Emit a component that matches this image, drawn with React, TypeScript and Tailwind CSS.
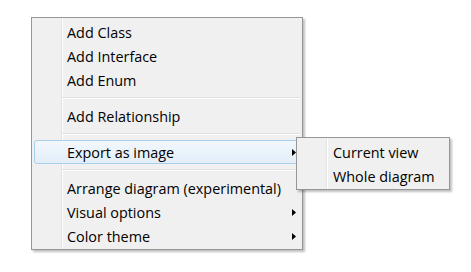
import React from "react";

type Entry = { label: string; sub?: boolean; active?: boolean } | "sep";

const mainItems: Entry[] = [
  { label: "Add Class" },
  { label: "Add Interface" },
  { label: "Add Enum" },
  "sep",
  { label: "Add Relationship" },
  "sep",
  { label: "Export as image", sub: true, active: true },
  "sep",
  { label: "Arrange diagram (experimental)" },
  { label: "Visual options", sub: true },
  { label: "Color theme", sub: true },
];

const gutter =
  "bg-[linear-gradient(to_right,#f0f0f0_29px,#e2e3e3_29px,#e2e3e3_30px,#ffffff_30px,#ffffff_31px,#f0f0f0_31px)]";

function Arrow() {
  return (
    <svg width="4" height="7" viewBox="0 0 4 7" className="absolute right-[3px] top-[8px]">
      <path d="M0 0 L4 3.5 L0 7 Z" fill="#000" />
    </svg>
  );
}

function Item({ label, sub, active, indent }: { label: string; sub?: boolean; active?: boolean; indent: string }) {
  return (
    <div
      className={
        "relative flex h-[24px] items-center pt-px " +
        indent +
        (active
          ? " rounded-[3px] border border-[#a8d0ec] bg-[linear-gradient(to_bottom,#f2f7fc,#e3eef9)]"
          : " border border-transparent")
      }
    >
      <span className="whitespace-nowrap">{label}</span>
      {sub && <Arrow />}
    </div>
  );
}

function Separator() {
  return (
    <div className="flex h-[12px] flex-col justify-center pl-[28px]">
      <div className="h-px bg-[#e0e0e0]" />
      <div className="h-px bg-white" />
    </div>
  );
}

export default function App() {
  return (
    <div className="h-[272px] w-[471px] bg-white font-['Open_Sans','Noto_Sans',sans-serif] text-[14.4px] text-black">
      <div className="relative ml-[31px] pt-[17px]">
        <div
          className={
            "w-[272px] border border-[#979797] px-[2px] pt-[2px] pb-px shadow-[2px_2px_2px_rgba(0,0,0,0.25)] " +
            gutter
          }
        >
          {mainItems.map((e, i) =>
            e === "sep" ? (
              <Separator key={i} />
            ) : (
              <Item key={i} label={e.label} sub={e.sub} active={e.active} indent="pl-[32px]" />
            )
          )}
        </div>

        <div
          className={
            "absolute left-[265px] top-[137px] w-[154px] border border-[#979797] px-[2px] pt-[2px] pb-px shadow-[2px_2px_2px_rgba(0,0,0,0.25)] " +
            gutter
          }
        >
          <Item label="Current view" indent="pl-[33px]" />
          <Item label="Whole diagram" indent="pl-[33px]" />
        </div>
      </div>
    </div>
  );
}
